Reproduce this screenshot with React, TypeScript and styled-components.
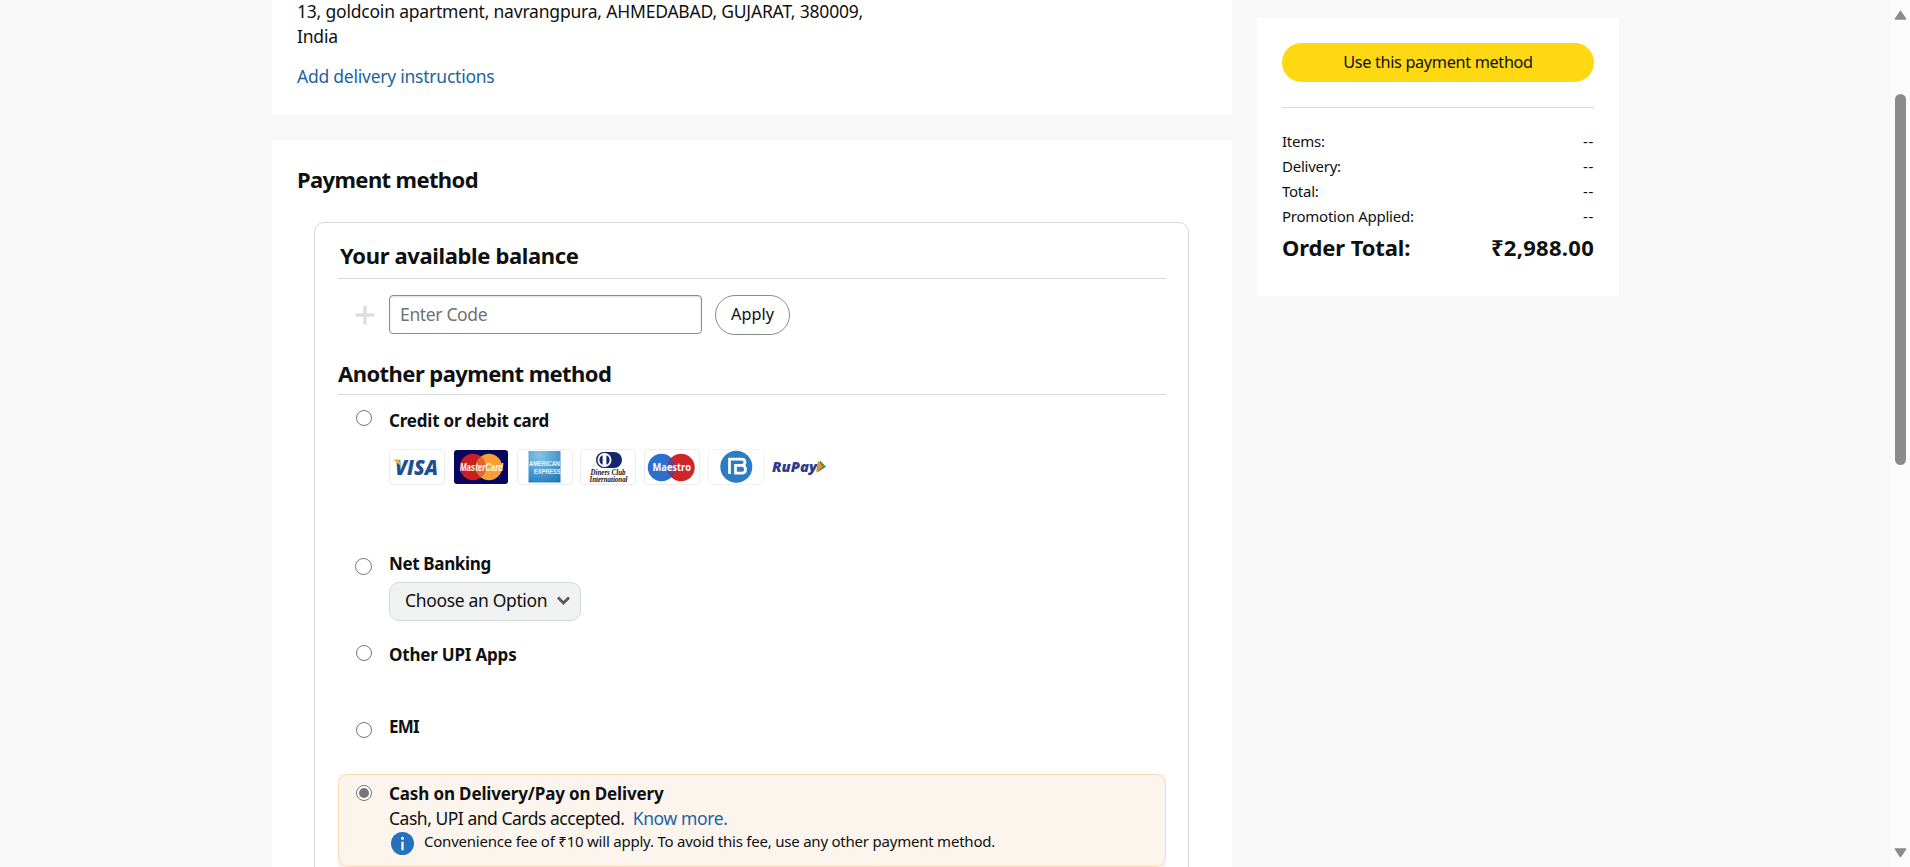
import React from 'react';
import styled, { createGlobalStyle } from 'styled-components';

const GlobalStyle = createGlobalStyle`
  * { box-sizing: border-box; }
  body {
    margin: 0;
    background: #f8f8f8;
    color: #0f1111;
    font-family: "Noto Sans", "Open Sans", sans-serif;
    font-size: 17.5px;
    line-height: 25px;
    overflow: hidden;
  }
`;

const Page = styled.div`
  display: flex;
  height: 867px;
  overflow: hidden;
`;

const Content = styled.div`
  display: flex;
  flex: 1;
  gap: 25px;
  align-items: flex-start;
  padding-left: 272px;
`;

const MainColumn = styled.main`
  display: flex;
  flex-direction: column;
  gap: 25px;
  width: 960px;
`;

const Text = styled.span<{ $track?: number }>`
  letter-spacing: ${({ $track = -0.2 }) => $track}px;
  white-space: nowrap;
`;

const Link = styled.a<{ $track?: number }>`
  color: #2162a1;
  letter-spacing: ${({ $track = -0.24 }) => $track}px;
  text-decoration: none;
  white-space: nowrap;
`;

const AddressCard = styled.section`
  height: 115px;
  padding: 0 25px;
  background: #fff;
`;

const AddressLines = styled.div`
  display: flex;
  flex-direction: column;
  margin-top: -1px;
  margin-bottom: 15px;
`;

const PaymentCard = styled.section`
  height: 760px;
  padding: 25px 25px 0;
  background: #fff;
`;

const Title = styled.h2<{ $track: number }>`
  margin: 0;
  font-size: 22px;
  font-weight: 700;
  line-height: 28px;
  letter-spacing: ${({ $track }) => $track}px;
  white-space: nowrap;
`;

const MethodsBox = styled.div`
  width: 875px;
  height: 700px;
  margin: 29px 0 0 17px;
  padding: 0 22px 0 23px;
  border: 1px solid #d5d9d9;
  border-radius: 10px;
`;

const SectionHead = styled.header<{ $top: number; $bottom: number; $indent?: number }>`
  padding: ${({ $top }) => $top}px 0 ${({ $bottom }) => $bottom}px ${({ $indent = 0 }) => $indent}px;
  border-bottom: 1px solid #d5d9d9;
`;

const CodeRow = styled.div`
  display: flex;
  align-items: center;
  height: 56px;
  padding: 15px 0 0 17px;
`;

const CodeInput = styled.input`
  width: 313px;
  height: 39px;
  margin-left: 14px;
  padding: 0 10px 2px;
  border: 1px solid #888c8c;
  border-radius: 4px;
  outline: 0;
  box-shadow: 0 1px 2px rgba(15, 17, 17, 0.15) inset;
  font: inherit;
  letter-spacing: -0.35px;
  &::placeholder { color: #6f7373; opacity: 1; }
`;

const ApplyButton = styled.button`
  width: 75px;
  height: 40px;
  margin-left: 13px;
  padding: 0;
  border: 1px solid #888c8c;
  border-radius: 20px;
  background: #fff;
  color: #0f1111;
  font: inherit;
  font-size: 16.25px;
`;

const Method = styled.div<{ $height: number }>`
  display: grid;
  grid-template-columns: 51px 1fr;
  align-items: start;
  height: ${({ $height }) => $height}px;
`;

const SelectedBackdrop = styled.div`
  background: #fcf5ee;
`;

const SelectedMethod = styled(Method)`
  grid-template-columns: 50px 1fr;
  border: 1px solid #fbd8b4;
  border-radius: 10px;
`;

const Radio = styled.span<{ $top: number; $left?: number; $size?: number; $checked?: boolean }>`
  display: flex;
  align-items: center;
  justify-content: center;
  width: ${({ $size = 16 }) => $size}px;
  height: ${({ $size = 16 }) => $size}px;
  margin: ${({ $top }) => $top}px 0 0 ${({ $left = 17.5 }) => $left}px;
  border: 1px solid #767676;
  border-radius: 50%;
  background: #fff;
  &::after {
    content: "";
    width: 10px;
    height: 10px;
    border-radius: 50%;
    background: ${({ $checked }) => ($checked ? '#767676' : 'transparent')};
  }
`;

const MethodBody = styled.div<{ $top: number }>`
  padding-top: ${({ $top }) => $top}px;
`;

const Label = styled.div<{ $track?: number }>`
  font-size: 17px;
  font-weight: 700;
  letter-spacing: ${({ $track = -0.2 }) => $track}px;
  white-space: nowrap;
`;

const Brands = styled.div`
  display: flex;
  gap: 7.8px;
  margin-top: 16px;
  svg { display: block; overflow: visible; }
`;

const Select = styled.button`
  display: flex;
  align-items: center;
  justify-content: space-between;
  width: 192px;
  height: 39px;
  margin-top: 6px;
  padding: 0 9px 2px 15px;
  border: 1px solid #d5d9d9;
  border-radius: 10px;
  background: #f0f2f2;
  color: #0f1111;
  font: inherit;
`;

const Notice = styled.div`
  display: flex;
  align-items: flex-start;
  gap: 10px;
  padding: 0 0 0 2px;
  font-size: 15px;
  line-height: 21px;
  svg { margin-top: 1px; }
`;

const Summary = styled.aside`
  width: 362px;
  height: 278px;
  margin-top: 18px;
  padding: 25px;
  background: #fff;
`;

const PrimaryButton = styled.button`
  display: block;
  width: 100%;
  height: 39px;
  padding: 0 0 1px;
  border: 0;
  border-radius: 20px;
  background: #ffd814;
  color: #0f1111;
  font: inherit;
  font-size: 16.25px;
`;

const Divider = styled.hr`
  height: 1px;
  margin: 25px 0 21px;
  border: 0;
  background: #d5d9d9;
`;

const SummaryRow = styled.div`
  display: flex;
  justify-content: space-between;
  font-size: 15px;
`;

const TotalRow = styled.div`
  display: flex;
  justify-content: space-between;
  margin-top: 4px;
`;

const Scrollbar = styled.div`
  display: flex;
  flex-direction: column;
  align-items: center;
  width: 19px;
  padding: 10px 0 9px;
  background: #fcfcfc;
`;

const Thumb = styled.div`
  width: 11px;
  height: 371px;
  margin: 74px 0 auto;
  border-radius: 6px;
  background: #8b8b8b;
`;

const Plus = () => (
  <svg width="20" height="20" viewBox="0 0 20 20">
    <path d="M10 0.5v19M0.5 10h19" stroke="#dedede" strokeWidth="3.4" />
  </svg>
);

const Chevron = () => (
  <svg width="15" height="11" viewBox="0 0 15 11">
    <path d="M2 2.5l5.5 5.5L13 2.5" fill="none" stroke="#565959" strokeWidth="2.8" />
  </svg>
);

const InfoIcon = () => (
  <svg width="23" height="23" viewBox="0 0 23 23">
    <circle cx="11.5" cy="11.5" r="11.5" fill="#2571bb" />
    <circle cx="11.5" cy="6.3" r="1.5" fill="#fff" />
    <path d="M11.5 9.7v8.6" stroke="#fff" strokeWidth="2.2" />
  </svg>
);

const Frame = () => <rect x="0.5" y="0.5" width="55" height="35" rx="3" fill="#fff" stroke="#ececec" />;

const Visa = () => (
  <svg width="56" height="36" viewBox="0 0 56 36">
    <Frame />
    <text x="6" y="25.5" fontFamily="Open Sans" fontSize="20.5" fontWeight="800" fontStyle="italic" fill="#1d4f94" textLength="43" lengthAdjust="spacingAndGlyphs">VISA</text>
    <path d="M4 10.5h6l2.5 7z" fill="#e9b344" />
  </svg>
);

const MasterCard = () => (
  <svg width="56" height="36" viewBox="0 0 56 36">
    <rect x="1" y="1" width="54" height="34" rx="3" fill="#06065e" />
    <circle cx="20" cy="18" r="13.2" fill="#c9201f" />
    <circle cx="36" cy="18" r="13.2" fill="#f8a033" />
    <path d="M28 7.5a13.2 13.2 0 0 1 0 21a13.2 13.2 0 0 1 0-21z" fill="#e0662b" />
    <text x="7" y="22" fontFamily="Liberation Sans" fontSize="10" fontWeight="700" fontStyle="italic" fill="#fff" textLength="43" lengthAdjust="spacingAndGlyphs">MasterCard</text>
  </svg>
);

const Amex = () => (
  <svg width="56" height="36" viewBox="0 0 56 36">
    <defs>
      <radialGradient id="amex" cx="35%" cy="15%" r="100%">
        <stop offset="0" stopColor="#86c4ea" />
        <stop offset="1" stopColor="#1f78b8" />
      </radialGradient>
    </defs>
    <Frame />
    <rect x="11.5" y="2" width="32" height="31.5" fill="url(#amex)" />
    <g fill="#eaf6fd" fontFamily="Liberation Sans" fontSize="6.5" fontWeight="700">
      <text x="12" y="17" textLength="31" lengthAdjust="spacingAndGlyphs">AMERICAN</text>
      <text x="17" y="24.5" textLength="26.5" lengthAdjust="spacingAndGlyphs">EXPRESS</text>
    </g>
  </svg>
);

const Diners = () => (
  <svg width="56" height="36" viewBox="0 0 56 36">
    <Frame />
    <rect x="16" y="3" width="26" height="16" rx="8" fill="#14276d" />
    <circle cx="24.5" cy="11" r="7" fill="#fff" />
    <path d="M22.6 6.2a5.2 5.2 0 0 0 0 9.6zM26.4 6.2a5.2 5.2 0 0 1 0 9.6z" fill="#14276d" />
    <g fill="#111" fontFamily="Liberation Serif" fontSize="7.5" fontStyle="italic" fontWeight="700">
      <text x="10.5" y="26" textLength="35" lengthAdjust="spacingAndGlyphs">Diners Club</text>
      <text x="9.5" y="33" textLength="38" lengthAdjust="spacingAndGlyphs">International</text>
    </g>
  </svg>
);

const Maestro = () => (
  <svg width="56" height="36" viewBox="0 0 56 36">
    <Frame />
    <circle cx="17.5" cy="18.5" r="13.7" fill="#2b70cd" />
    <circle cx="37" cy="18.5" r="13.7" fill="#cf2428" />
    <path d="M27.25 8.9a13.7 13.7 0 0 1 0 19.2a13.7 13.7 0 0 1 0-19.2z" fill="#60438a" />
    <text x="8.5" y="22" fontFamily="Open Sans" fontSize="10.5" fontWeight="700" fill="#fff" textLength="38.5" lengthAdjust="spacingAndGlyphs">Maestro</text>
  </svg>
);

const Bajaj = () => (
  <svg width="56" height="36" viewBox="0 0 56 36">
    <rect x="0.5" y="0.5" width="55" height="35" rx="3" fill="#fff" stroke="#f3f3f3" />
    <circle cx="28.3" cy="17.7" r="16" fill="#2b7cc4" />
    <path
      d="M21.5 25V10.2h12q3.5 0 3.5 3.1t-3.5 3.1h-6v7.8h6.5q3.5 0 3.5-3.9q0-3.4-3.5-3.9"
      fill="none"
      stroke="#fff"
      strokeWidth="2.7"
    />
  </svg>
);

const RuPay = () => (
  <svg width="56" height="36" viewBox="0 0 56 36">
    <text x="0" y="22.5" fontFamily="Open Sans" fontSize="14.5" fontWeight="800" fontStyle="italic" fill="#2f3a8c" textLength="45" lengthAdjust="spacingAndGlyphs">RuPay</text>
    <path d="M48 11.5l6 6.2-8.5 5.8z" fill="#2f9a4b" />
    <path d="M46 11.5l5 6.2-7 5.8z" fill="#f08a2c" />
  </svg>
);

const Arrow = ({ down }: { down?: boolean }) => (
  <svg width="13" height="10" viewBox="0 0 13 10">
    <path
      d={down ? 'M1.5 1h10L6.5 8.5z' : 'M1.5 9h10L6.5 1.5z'}
      fill="#8b8b8b"
      stroke="#8b8b8b"
      strokeWidth="1.6"
      strokeLinejoin="round"
    />
  </svg>
);

const summaryLines = ['Items:', 'Delivery:', 'Total:', 'Promotion Applied:'];

export default function App() {
  return (
    <Page>
      <GlobalStyle />
      <Content>
        <MainColumn>
          <AddressCard>
            <AddressLines>
              <Text $track={-0.2}>13, goldcoin apartment, navrangpura, AHMEDABAD, GUJARAT, 380009,</Text>
              <Text>India</Text>
            </AddressLines>
            <Link href="#">Add delivery instructions</Link>
          </AddressCard>

          <PaymentCard>
            <Title $track={-0.62}>Payment method</Title>
            <MethodsBox>
              <SectionHead $top={18} $bottom={9} $indent={2}>
                <Title $track={-0.36}>Your available balance</Title>
              </SectionHead>
              <CodeRow>
                <Plus />
                <CodeInput placeholder="Enter Code" />
                <ApplyButton>Apply</ApplyButton>
              </CodeRow>
              <SectionHead $top={24} $bottom={7}>
                <Title $track={-0.56}>Another payment method</Title>
              </SectionHead>

              <Method $height={150}>
                <Radio $top={15} />
                <MethodBody $top={13}>
                  <Label>Credit or debit card</Label>
                  <Brands>
                    <Visa />
                    <MasterCard />
                    <Amex />
                    <Diners />
                    <Maestro />
                    <Bajaj />
                    <RuPay />
                  </Brands>
                </MethodBody>
              </Method>
              <Method $height={95}>
                <Radio $top={13} $left={17} $size={17} />
                <MethodBody $top={6}>
                  <Label $track={-0.35}>Net Banking</Label>
                  <Select>
                    <Text $track={-0.34}>Choose an Option</Text>
                    <Chevron />
                  </Select>
                </MethodBody>
              </Method>
              <Method $height={70}>
                <Radio $top={5} />
                <MethodBody $top={2}>
                  <Label>Other UPI Apps</Label>
                </MethodBody>
              </Method>
              <Method $height={64}>
                <Radio $top={12} />
                <MethodBody $top={4}>
                  <Label $track={-0.8}>EMI</Label>
                </MethodBody>
              </Method>
              <SelectedBackdrop>
                <SelectedMethod $height={93}>
                  <Radio $top={9.5} $left={16.5} $checked />
                  <MethodBody $top={6}>
                    <Label $track={-0.14}>Cash on Delivery/Pay on Delivery</Label>
                    <div>
                      <Text $track={-0.48}>Cash, UPI and Cards accepted.&nbsp; </Text>
                      <Link $track={-0.38}>Know more.</Link>
                    </div>
                    <Notice>
                      <InfoIcon />
                      <Text $track={-0.22}>Convenience fee of ₹10 will apply. To avoid this fee, use any other payment method.</Text>
                    </Notice>
                  </MethodBody>
                </SelectedMethod>
              </SelectedBackdrop>
            </MethodsBox>
          </PaymentCard>
        </MainColumn>

        <Summary>
          <PrimaryButton>
            <Text $track={-0.33}>Use this payment method</Text>
          </PrimaryButton>
          <Divider />
          {summaryLines.map((line) => (
            <SummaryRow key={line}>
              <Text $track={-0.25}>{line}</Text>
              <Text $track={0.7}>--</Text>
            </SummaryRow>
          ))}
          <TotalRow>
            <Title as="strong" $track={-0.12}>Order Total:</Title>
            <Title as="strong" $track={0.28}>₹2,988.00</Title>
          </TotalRow>
        </Summary>
      </Content>

      <Scrollbar>
        <Arrow />
        <Thumb />
        <Arrow down />
      </Scrollbar>
    </Page>
  );
}
